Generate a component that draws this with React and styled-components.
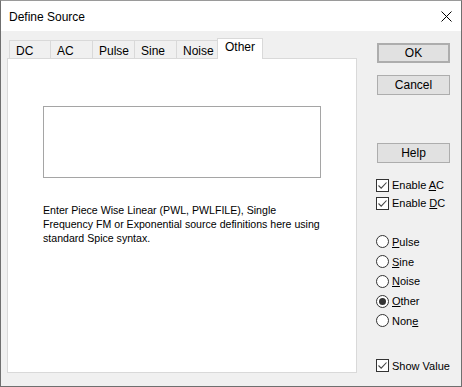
import React from "react";
import styled, { createGlobalStyle } from "styled-components";

const Global = createGlobalStyle`
    html, body {
        margin: 0;
        padding: 0;
        background: #ffffff;
    }
    * {
        box-sizing: border-box;
    }
`;

const TABS = ["DC", "AC", "Pulse", "Sine", "Noise", "Other"];
const TAB_WIDTHS = [42, 43, 43, 43, 42, 46];

const RADIOS = [
    { pre: "", key: "P", post: "ulse" },
    { pre: "", key: "S", post: "ine" },
    { pre: "", key: "N", post: "oise" },
    { pre: "", key: "O", post: "ther", on: true },
    { pre: "Non", key: "e", post: "" },
];

function Check() {
    return (
        <Box>
            <svg width="11" height="11" viewBox="0 0 11 11">
                <path d="M1.5 5.5 L4.2 8.2 L9.5 2.5" fill="none" stroke="#444" strokeWidth="1.1" />
            </svg>
        </Box>
    );
}

function CheckRow({ children }) {
    return (
        <OptRow $h={18}>
            <Check />
            <span>{children}</span>
        </OptRow>
    );
}

function App() {
    return (
        <>
            <Global />
            <Window>
                <TitleBar>
                    <Title>Define Source</Title>
                    <Close>
                        <svg width="11" height="11" viewBox="0 0 11 11">
                            <path d="M0.5 0.5 L10.5 10.5 M10.5 0.5 L0.5 10.5" stroke="#000" strokeWidth="1" />
                        </svg>
                    </Close>
                </TitleBar>
                <Body>
                    <TabArea>
                        <TabRow>
                            {TABS.map((t, i) => (
                                <Tab key={t} $active={t === "Other"} $w={TAB_WIDTHS[i]}>
                                    {t}
                                </Tab>
                            ))}
                        </TabRow>
                        <Panel>
                            <Editor />
                            <Hint>
                                Enter Piece Wise Linear (PWL, PWLFILE), Single
                                <br />
                                Frequency FM or Exponential source definitions here using
                                <br />
                                standard Spice syntax.
                            </Hint>
                        </Panel>
                    </TabArea>
                    <Side>
                        <Button $default>OK</Button>
                        <Button $top={12}>Cancel</Button>
                        <Button $top={48}>Help</Button>
                        <Group $top={13}>
                            <CheckRow>
                                Enable <u>A</u>C
                            </CheckRow>
                            <CheckRow>
                                Enable <u>D</u>C
                            </CheckRow>
                        </Group>
                        <Group $top={20}>
                            {RADIOS.map((r) => (
                                <OptRow key={r.key + r.post} $h={19.75}>
                                    <Radio $on={r.on} />
                                    <span>
                                        {r.pre}
                                        <u>{r.key}</u>
                                        {r.post}
                                    </span>
                                </OptRow>
                            ))}
                        </Group>
                        <Group $top={26}>
                            <CheckRow>Show Value</CheckRow>
                        </Group>
                    </Side>
                </Body>
            </Window>
        </>
    );
}

const Window = styled.div`
    width: 462px;
    height: 387px;
    display: flex;
    flex-direction: column;
    border: 1px solid #6f6f6f;
    border-top-color: #9a9a9a;
    font-family: "Liberation Sans", Arial, sans-serif;
    font-size: 11px;
    color: #000;
    background: #f0f0f0;
`;

const TitleBar = styled.div`
    height: 30px;
    flex: none;
    background: #ffffff;
    display: flex;
    align-items: center;
    justify-content: space-between;
    padding: 0 9px 0 8px;
`;

const Title = styled.span`
    font-size: 12px;
    padding-top: 1px;
`;

const Close = styled.span`
    display: flex;
    padding-top: 1px;
`;

const Body = styled.div`
    flex: 1;
    display: flex;
    padding: 7px 0 0 6px;
`;

const TabArea = styled.div`
    width: 350px;
    display: flex;
    flex-direction: column;
`;

const TabRow = styled.div`
    height: 20px;
    display: flex;
    align-items: flex-end;
    padding-left: 2px;
    position: relative;
    z-index: 1;
`;

const Tab = styled.div`
    width: ${(p) => p.$w}px;
    height: ${(p) => (p.$active ? 21 : 18)}px;
    margin-left: -1px;
    margin-bottom: ${(p) => (p.$active ? -1 : 0)}px;
    padding: ${(p) => (p.$active ? "1px 0 0 7px" : "3px 0 0 6px")};
    border: 1px solid #d9d9d9;
    border-bottom: none;
    background: ${(p) => (p.$active ? "#ffffff" : "#f0f0f0")};
    font-size: 12px;
    line-height: 14px;
    &:first-child {
        margin-left: 0;
    }
`;

const Panel = styled.div`
    height: 315px;
    background: #ffffff;
    border: 1px solid #d9d9d9;
    padding: 47px 0 0 35px;
`;

const Editor = styled.div`
    width: 278px;
    height: 72px;
    border: 1px solid #a5a5a5;
    background: #ffffff;
`;

const Hint = styled.div`
    margin-top: 25px;
    font-size: 10.6px;
    line-height: 14px;
    white-space: nowrap;
`;

const Side = styled.div`
    margin-left: 20px;
    width: 73px;
    display: flex;
    flex-direction: column;
    padding-top: 5px;
`;

const Button = styled.div`
    height: 20px;
    margin-top: ${(p) => p.$top || 0}px;
    border: ${(p) => (p.$default ? "2px solid #adadad" : "1px solid #adadad")};
    background: #e1e1e1;
    display: flex;
    align-items: center;
    justify-content: center;
    font-size: 12px;
`;

const Group = styled.div`
    margin-top: ${(p) => p.$top}px;
    display: flex;
    flex-direction: column;
    margin-left: -1px;
`;

const OptRow = styled.div`
    height: ${(p) => p.$h}px;
    display: flex;
    align-items: center;
    gap: 3px;
    font-size: 11px;
    white-space: nowrap;
`;

const Box = styled.span`
    width: 13px;
    height: 13px;
    flex: none;
    border: 1px solid #333333;
    background: #ffffff;
    display: flex;
    align-items: center;
    justify-content: center;
`;

const Radio = styled.span`
    width: 13px;
    height: 13px;
    flex: none;
    border-radius: 50%;
    border: 1px solid #333333;
    background: #ffffff;
    display: flex;
    align-items: center;
    justify-content: center;
    &::after {
        content: "";
        width: 7px;
        height: 7px;
        border-radius: 50%;
        background: ${(p) => (p.$on ? "#333333" : "transparent")};
    }
`;

export default App;
